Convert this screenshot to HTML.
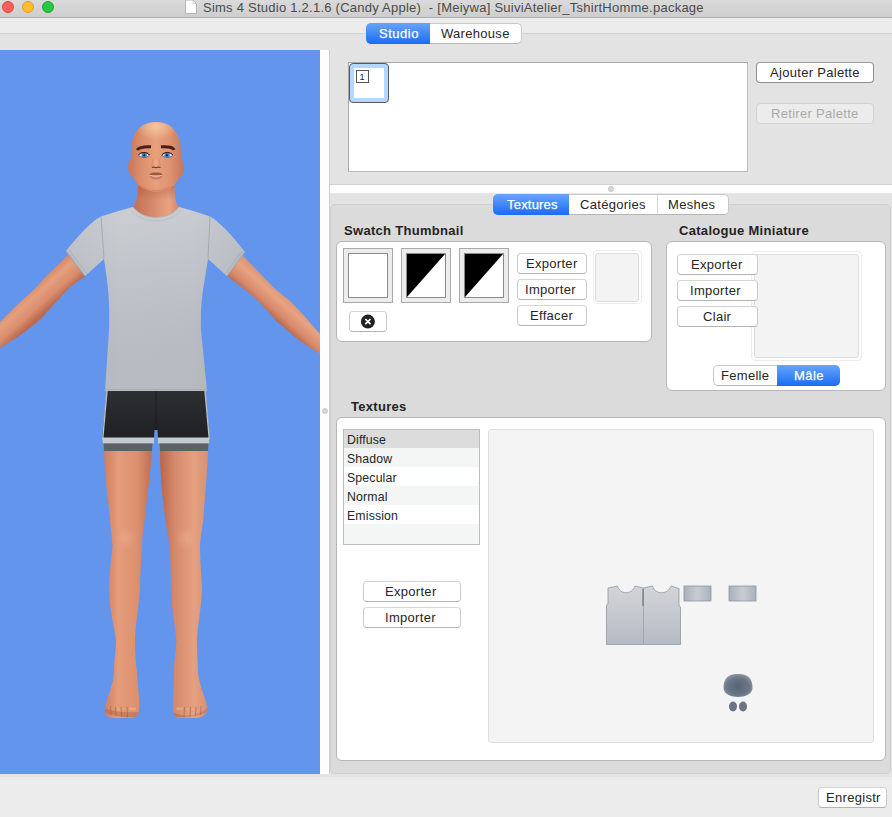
<!DOCTYPE html>
<html><head><meta charset="utf-8">
<style>
*{margin:0;padding:0;box-sizing:border-box}
html,body{width:892px;height:817px;overflow:hidden;background:#ececec;font-family:"Liberation Sans",sans-serif;font-size:13px;color:#262626}
.a{position:absolute}
.t{position:absolute;white-space:nowrap;line-height:13px;letter-spacing:0.3px}
.btn{position:absolute;background:#fff;border:1px solid #cacaca;border-top-color:#d4d4d4;border-bottom-color:#b3b3b3;border-radius:4px}
.box{position:absolute;background:#fff;border:1px solid #b6b6b6;border-radius:6px}
.lbl{position:absolute;font-weight:bold;font-size:13px;color:#232323;white-space:nowrap;line-height:13px;letter-spacing:0.3px}
.segw{position:absolute;background:#fff;border:1px solid #c9c9c9;border-bottom-color:#b6b6b6;border-radius:5px}
.sel{position:absolute;background:linear-gradient(#67a5fb,#1a6cf4)}
.dv{position:absolute;width:1px;background:#d6d6d6}
</style></head><body>
<div class="a" style="left:0;top:0;width:892px;height:18px;background:linear-gradient(#dadada,#cecece);border-bottom:1px solid #aeaeae"></div>
<div class="a" style="left:2px;top:1px;width:12px;height:12px;border-radius:50%;background:#fe5f57;border:0.5px solid #e0443e"></div>
<div class="a" style="left:22px;top:1px;width:12px;height:12px;border-radius:50%;background:#febc2e;border:0.5px solid #dea123"></div>
<div class="a" style="left:42px;top:1px;width:12px;height:12px;border-radius:50%;background:#28c840;border:0.5px solid #1aab29"></div>
<svg class="a" style="left:185px;top:0" width="13" height="15"><path d="M0.5 0 H8 L11.5 3.5 V13.5 H0.5 Z" fill="#fff" stroke="#b4b4b4" stroke-width="1"/><path d="M8 0 V3.5 H11.5" fill="none" stroke="#c4c4c4" stroke-width="0.8"/></svg>
<div class="t" style="left:203px;top:1px;color:#4b4b4b;letter-spacing:0.245px">Sims 4 Studio 1.2.1.6 (Candy Apple)&nbsp; - [Meiywa] SuiviAtelier_TshirtHomme.package</div>
<div class="a" style="left:0;top:18px;width:892px;height:16px;background:#ececec;border-bottom:1px solid #d2d2d2"></div>
<div class="a" style="left:0;top:34px;width:892px;height:16px;background:#e3e3e3"></div>
<div class="segw" style="left:366px;top:23px;width:156px;height:21px"></div>
<div class="sel" style="left:366px;top:23px;width:64px;height:21px;border-radius:5px 0 0 5px"></div>
<div class="t" style="left:379px;top:27px;color:#fff;letter-spacing:0.5px;-webkit-text-stroke:0.25px #fff">Studio</div>
<div class="t" style="left:441px;top:27px">Warehouse</div>
<div class="a" style="left:0;top:50px;width:320px;height:724px;background:#6495ed"></div>
<svg class="a" style="left:0;top:50px" width="320" height="723" viewBox="0 50 320 723">
<defs>
<linearGradient id="skinL" x1="0" x2="1" y1="0" y2="0"><stop offset="0" stop-color="#cf7f5e"/><stop offset="0.3" stop-color="#e49c7a"/><stop offset="0.7" stop-color="#dc906e"/><stop offset="1" stop-color="#c06e52"/></linearGradient>
<linearGradient id="skinR" x1="0" x2="1" y1="0" y2="0"><stop offset="0" stop-color="#b8664d"/><stop offset="0.3" stop-color="#d4896a"/><stop offset="0.7" stop-color="#e4a080"/><stop offset="1" stop-color="#d89271"/></linearGradient>
<linearGradient id="armL" gradientUnits="userSpaceOnUse" x1="29" y1="290" x2="47" y2="310"><stop offset="0" stop-color="#d48868"/><stop offset="0.3" stop-color="#e6a07e"/><stop offset="0.7" stop-color="#d98d6c"/><stop offset="1" stop-color="#b96a50"/></linearGradient>
<linearGradient id="armR" gradientUnits="userSpaceOnUse" x1="286" y1="295" x2="268" y2="315"><stop offset="0" stop-color="#dc9472"/><stop offset="0.3" stop-color="#e8a382"/><stop offset="0.7" stop-color="#d68a6a"/><stop offset="1" stop-color="#b5654c"/></linearGradient>
<linearGradient id="headG" x1="0" x2="1" y1="0" y2="0"><stop offset="0" stop-color="#c8765a"/><stop offset="0.25" stop-color="#dc906e"/><stop offset="0.5" stop-color="#e89f7c"/><stop offset="0.75" stop-color="#de9271"/><stop offset="1" stop-color="#c6755a"/></linearGradient>
<radialGradient id="scalp" cx="0.5" cy="0.15" r="0.5"><stop offset="0" stop-color="#f3c79e" stop-opacity="1"/><stop offset="1" stop-color="#f3c79e" stop-opacity="0"/></radialGradient>
<linearGradient id="neckG" x1="0" x2="1"><stop offset="0" stop-color="#c06c50"/><stop offset="0.4" stop-color="#d4876a"/><stop offset="0.75" stop-color="#e9a281"/><stop offset="1" stop-color="#cf7e60"/></linearGradient>
<linearGradient id="shirtG" x1="0" x2="1" y1="0" y2="0"><stop offset="0" stop-color="#b3b8bf"/><stop offset="0.3" stop-color="#bcc0c6"/><stop offset="0.7" stop-color="#babec5"/><stop offset="1" stop-color="#afb4bc"/></linearGradient>
<linearGradient id="shortsG" x1="0" x2="0" y1="0" y2="1"><stop offset="0" stop-color="#2f3033"/><stop offset="0.5" stop-color="#27282b"/><stop offset="1" stop-color="#202124"/></linearGradient>
<linearGradient id="shirtV" x1="0" x2="0" y1="0" y2="1"><stop offset="0" stop-color="#ffffff" stop-opacity="0.22"/><stop offset="0.45" stop-color="#ffffff" stop-opacity="0.05"/><stop offset="1" stop-color="#000000" stop-opacity="0.02"/></linearGradient>
<clipPath id="clL"><path d="M104 450 L152 450 C150 480 146 505 145 518 C143 530 142 540 142 546 C141 565 140 580 140 590 C138 610 135 630 135 641 C135 655 136 665 137 672 C138 690 140 700 139 708 C139 714 137 717 133 718 L112 718 C106 717 104 712 105 708 C108 695 114 682 114 672 C114 660 116 650 116 641 C114 625 109 605 109 590 C109 570 112 555 112.5 546 C112 535 110 525 110 518 C108 500 105 480 104 450 Z"/></clipPath><clipPath id="clR"><path d="M160 450 L208 450 C207 480 204 505 203.5 518 C202 530 200 540 200 546 C200 565 202 580 202 590 C201 610 197 630 197 641 C197 655 198 665 198 672 C200 690 207 700 207 708 C207 714 203 717 198 718 L178 718 C174 717 173 712 173 708 C173 695 174 682 174 672 C174 660 176 650 176.5 641 C175 625 171 605 171 590 C171 570 170 555 170 546 C168 535 166 525 165 518 C163 500 160 480 160 450 Z"/></clipPath>
<linearGradient id="jawSh" x1="0" x2="0" y1="0" y2="1"><stop offset="0" stop-color="#a85a42" stop-opacity="0.5"/><stop offset="1" stop-color="#a85a42" stop-opacity="0"/></linearGradient>
<radialGradient id="knee"><stop offset="0" stop-color="#f0b090" stop-opacity="0.45"/><stop offset="1" stop-color="#f0b090" stop-opacity="0"/></radialGradient>
</defs>
<!-- arms -->
<path d="M70 253 C60 263 50 272 43 279.5 C40 283 38 286 35 288.5 C26 297 17 305 10 312 C6 316 3 319 0 322 L0 348 C7 343.5 15 338.5 22 334 C29 329 35 324 41 319 C47 312 53 305 59 299 C63 294.5 66.5 290.5 70.5 287 C75 283 80 279.5 86 276 Z" fill="url(#armL)"/>
<path d="M241 254 C252 265 263 276.5 273.7 287.7 C280 293 286.5 298 292.8 303.7 C302 313 311 323.5 320 334 L320 354 C313 349.5 306 345 299 340.3 C291.5 334 284 327.5 276.8 321.2 C270 314 264 307 257.7 300.5 C248 292 238 284 227 276 Z" fill="url(#armR)"/>
<!-- legs -->
<path d="M104 450 L152 450 C150 480 146 505 145 518 C143 530 142 540 142 546 C141 565 140 580 140 590 C138 610 135 630 135 641 C135 655 136 665 137 672 C138 690 140 700 139 708 C139 714 137 717 133 718 L112 718 C106 717 104 712 105 708 C108 695 114 682 114 672 C114 660 116 650 116 641 C114 625 109 605 109 590 C109 570 112 555 112.5 546 C112 535 110 525 110 518 C108 500 105 480 104 450 Z" fill="url(#skinL)"/>
<path d="M160 450 L208 450 C207 480 204 505 203.5 518 C202 530 200 540 200 546 C200 565 202 580 202 590 C201 610 197 630 197 641 C197 655 198 665 198 672 C200 690 207 700 207 708 C207 714 203 717 198 718 L178 718 C174 717 173 712 173 708 C173 695 174 682 174 672 C174 660 176 650 176.5 641 C175 625 171 605 171 590 C171 570 170 555 170 546 C168 535 166 525 165 518 C163 500 160 480 160 450 Z" fill="url(#skinR)"/>
<ellipse cx="126" cy="538" rx="11" ry="12" fill="url(#knee)"/>
<ellipse cx="186" cy="538" rx="11" ry="12" fill="url(#knee)"/>
<!-- toes -->
<g clip-path="url(#clL)"><path d="M105 712 C110 716 125 718 139 717 L139 712 C128 713 112 712 105 708 Z" fill="#b9674f" opacity="0.55"/>
<path d="M110.5 706 L111 715 M115.5 707 L116 716 M121 707 L121.5 717 M127 707 L127.5 717" stroke="#9e533f" stroke-width="1" opacity="0.5"/>
<path d="M129 707.5 L136 707.5 L136 710 L129 710 Z" fill="#eab596" opacity="0.6"/>
<path d="M123 709 L126 709 M117 709 L120 709" stroke="#e8b093" stroke-width="1.2" opacity="0.8"/>
</g>
<g clip-path="url(#clR)"><path d="M173 712 C185 718 200 716 207 708 L207 712 C200 716 185 717 173 717 Z" fill="#b9674f" opacity="0.55"/>
<path d="M184.5 707 L184 717 M190.5 707 L190 717 M196 707 L195.5 716 M201 706 L200.5 715" stroke="#9e533f" stroke-width="1" opacity="0.5"/>
<path d="M176.5 707.5 L183 707.5 L183 710 L176.5 710 Z" fill="#eab596" opacity="0.6"/>
<path d="M186 709 L189 709 M192 709 L195 709" stroke="#e8b093" stroke-width="1.2" opacity="0.8"/>
</g>
<!-- shorts -->
<path d="M107 389 L205 389 L209.5 438 L158 438 L157.5 430 L154.5 430 L154 438 L102 438 Z" fill="url(#shortsG)"/>
<path d="M156 391 L156 430" stroke="#18191b" stroke-width="0.8"/>
<path d="M107 391 L102.8 438 M205 391 L209.2 438" stroke="#b9bec2" stroke-width="1.4" fill="none"/>
<path d="M102 437.5 L154 437.5 L154 443.5 L103 443.5 Z" fill="#c4cacd"/>
<path d="M158 437.5 L209.5 437.5 L209 443.5 L158 443.5 Z" fill="#c4cacd"/>
<path d="M103.5 443.5 L152.5 443.5 L152 451 L104 451 Z" fill="#5f6062"/>
<path d="M159.5 443.5 L208.5 443.5 L208 451 L160 451 Z" fill="#5f6062"/>
<!-- neck -->
<path d="M138 184 L174.5 184 C174.5 195 175 203 179 207 L182 214 C172 226 142 226 130 214 L133 207 C137 203 137.5 195 138 184 Z" fill="url(#neckG)"/>
<path d="M138 186 L174.5 186 L174.5 200 L138 200 Z" fill="url(#jawSh)"/>
<!-- shirt -->
<path d="M133 207 C143 221 169 221 179 207 C190 210 200 213 210 216.5 C220 222 236 240 245 252 L227 276 L208 259 C204 285 200 300 201 330 L207 391 L105 391 L109 330 C110 300 108 285 104 259 L85 276 L66 251 C75 240 90 222 101 216.5 C112 213 122 210 133 207 Z" fill="url(#shirtG)"/><path d="M133 207 C143 221 169 221 179 207 C190 210 200 213 210 216.5 C220 222 236 240 245 252 L227 276 L208 259 C204 285 200 300 201 330 L207 391 L105 391 L109 330 C110 300 108 285 104 259 L85 276 L66 251 C75 240 90 222 101 216.5 C112 213 122 210 133 207 Z" fill="url(#shirtV)"/>
<path d="M133 207 C143 221 169 221 179 207" stroke="#aeb2b8" stroke-width="0.8" fill="none"/>
<path d="M130.5 209.5 C141 224.5 171 224.5 181.5 209.5" stroke="#9da2a9" stroke-width="0.6" stroke-dasharray="1.2 0.8" fill="none" opacity="0.8"/>
<path d="M101 216.5 C102 230 103 245 104 259 M210 216.5 C209.5 230 208.5 245 208 259" stroke="#9da2a9" stroke-width="0.8" fill="none"/>
<path d="M66.5 251.5 L85 276 M244.5 252.5 L227 276" stroke="#a3a8ae" stroke-width="1.2" fill="none"/><path d="M69 250 L86.5 273.5 M242 251 L226 273" stroke="#8f949b" stroke-width="0.5" fill="none" opacity="0.8"/>
<path d="M105 389.5 L207 389.5" stroke="#a9adb3" stroke-width="1"/>
<!-- head -->
<path d="M156 122 C140 122 131 134 131 152 L131 160 L128.5 162 C127 170 130 177 134 178 C137 186 145 191.5 156 191.5 C167 191.5 175 186 179 178 C183 177 185 170 183.5 162 L181 160 L181 152 C181 134 172 122 156 122 Z" fill="url(#headG)"/>
<ellipse cx="156" cy="136" rx="20" ry="14" fill="url(#scalp)"/>
<path d="M137 150 C139 147 143 146.5 151 146.8" stroke="#4a1f17" stroke-width="2.9" fill="none"/>
<path d="M161 146.8 C169 146.5 173 147 174 150" stroke="#4a1f17" stroke-width="2.9" fill="none"/>
<path d="M138.6 155.3 C141 152 147 152 149.3 155.3 C147 158 141 158 138.6 155.3 Z" fill="#eef2f6" stroke="#3c2a26" stroke-width="0.6"/>
<path d="M162 155.3 C164.5 152 170 152 172.7 155.3 C170 158 164.5 158 162 155.3 Z" fill="#eef2f6" stroke="#3c2a26" stroke-width="0.6"/>
<circle cx="144.2" cy="155.2" r="2.6" fill="#2f86d2"/>
<circle cx="167" cy="155.2" r="2.6" fill="#2f86d2"/>
<circle cx="144.2" cy="155.2" r="1" fill="#111"/><path d="M138.3 155 C141 151.6 147 151.6 149.6 155" stroke="#2a1a16" stroke-width="1" fill="none"/>
<circle cx="167" cy="155.2" r="1" fill="#111"/><path d="M161.7 155 C164.5 151.6 170 151.6 173 155" stroke="#2a1a16" stroke-width="1" fill="none"/>
<path d="M153 159 C152.5 162 152 164 151.5 166 M159 159 C159.5 162 160 164 160.5 166" stroke="#c97a5c" stroke-width="1.4" opacity="0.3"/><ellipse cx="156" cy="163" rx="2.2" ry="4" fill="#f0b08b" opacity="0.5"/>
<path d="M152 167.8 C153.5 166.3 155 167.2 156 167.8 C157 167.2 158.5 166.3 160.5 167.8" stroke="#7e3d2e" stroke-width="1.3" fill="none"/>
<path d="M148.5 175 C151 172.5 154 172 156 172.8 C158 172 161 172.5 163 175 C159 175.6 152 175.6 148.5 175 Z" fill="#a0553f"/>
<path d="M149.5 175.3 C153 176.2 159 176.2 162.3 175.3" stroke="#dcc6bb" stroke-width="0.9" fill="none"/>
<path d="M150 176.4 C153 179.2 159 179.2 162 176.4" stroke="#c07a62" stroke-width="1.8" fill="none"/>
<path d="M142 186 C148 192 164 192 170 186" stroke="#c77859" stroke-width="1" fill="none" opacity="0.6"/>
</svg>
<div class="a" style="left:320px;top:50px;width:10px;height:724px;background:#fdfdfd;border-right:1px solid #cdcdcd"></div>
<div class="a" style="left:322px;top:408px;width:6px;height:6px;border-radius:50%;background:#d9d9d9;border:1px solid #c6c6c6"></div>
<div class="a" style="left:330px;top:50px;width:562px;height:135px;background:#e3e3e3;border-bottom:1px solid #d2d2d2"></div>
<div class="a" style="left:348px;top:62px;width:400px;height:110px;background:#fff;border:1px solid #bcbcbc;border-left-color:#a8a8a8;border-top-color:#a8a8a8"></div>
<div class="a" style="left:349px;top:63px;width:40px;height:40px;border-radius:4px;background:#b3d7ff;border:1px solid #5a5a5a"></div>
<div class="a" style="left:354px;top:68px;width:30px;height:30px;background:#fff"></div>
<div class="a" style="left:356px;top:70px;width:13px;height:13px;background:#fff;border:1px solid #555"></div>
<div class="t" style="left:359.5px;top:72.5px;font-size:9px;line-height:9px;color:#222;letter-spacing:0">1</div>
<div class="btn" style="left:756px;top:62px;width:118px;height:21px;border-color:#8e8e8e;border-top-color:#9a9a9a"></div><div class="t" style="left:770px;top:66px;">Ajouter Palette</div>
<div class="btn" style="left:756px;top:103px;width:118px;height:21px;background:#ececec;border-color:#d2d2d2"></div><div class="t" style="left:771px;top:107px;color:#a9a9a9">Retirer Palette</div>
<div class="a" style="left:330px;top:185px;width:562px;height:8px;background:#fdfdfd"></div>
<div class="a" style="left:608px;top:186px;width:6px;height:6px;border-radius:50%;background:#d9d9d9;border:1px solid #c6c6c6"></div>
<div class="a" style="left:330px;top:193px;width:562px;height:581px;background:#e3e3e3;border-top:1px solid #e8e8e8"></div>
<div class="a" style="left:330px;top:204px;width:561px;height:570px;background:#dbdbdb;border:1px solid #d0d0d0;border-radius:5px"></div>
<div class="segw" style="left:493px;top:194px;width:236px;height:21px"></div>
<div class="sel" style="left:493px;top:194px;width:76px;height:21px;border-radius:5px 0 0 5px"></div>
<div class="dv" style="left:657px;top:195px;height:19px"></div>
<div class="t" style="left:507px;top:198px;color:#fff;letter-spacing:0.2px;-webkit-text-stroke:0.25px #fff">Textures</div>
<div class="t" style="left:580px;top:198px">Catégories</div>
<div class="t" style="left:668px;top:198px">Meshes</div>
<div class="lbl" style="left:344px;top:224px">Swatch Thumbnail</div>
<div class="box" style="left:336px;top:241px;width:316px;height:101px"></div>
<div class="a" style="left:343px;top:248px;width:50px;height:55px;background:#ececec;border:1px solid #a9a9a9"></div>
<div class="a" style="left:401px;top:248px;width:50px;height:55px;background:#ececec;border:1px solid #a9a9a9"></div>
<div class="a" style="left:459px;top:248px;width:50px;height:55px;background:#ececec;border:1px solid #a9a9a9"></div>
<div class="a" style="left:348px;top:253px;width:40px;height:45px;background:#fff;border:1px solid #8a8a8a"></div>
<svg class="a" style="left:406px;top:253px" width="40" height="45"><rect x="0.5" y="0.5" width="39" height="44" fill="#fff" stroke="#8a8a8a"/><path d="M1 1 H39 L1 44 Z" fill="#000"/></svg>
<svg class="a" style="left:464px;top:253px" width="40" height="45"><rect x="0.5" y="0.5" width="39" height="44" fill="#fff" stroke="#8a8a8a"/><path d="M1 1 H39 L1 44 Z" fill="#000"/></svg>
<div class="btn" style="left:349px;top:311px;width:38px;height:21px"></div>
<svg class="a" style="left:360px;top:314px" width="16" height="16"><circle cx="7.9" cy="7.6" r="7" fill="#222"/><path d="M5.3 5 L10.5 10.2 M10.5 5 L5.3 10.2" stroke="#fff" stroke-width="1.7"/></svg>
<div class="btn" style="left:517px;top:253px;width:70px;height:21px;"></div><div class="t" style="left:526px;top:257px;">Exporter</div>
<div class="btn" style="left:517px;top:279px;width:70px;height:21px;"></div><div class="t" style="left:525px;top:283px;">Importer</div>
<div class="btn" style="left:517px;top:305px;width:70px;height:21px;"></div><div class="t" style="left:530px;top:309px;">Effacer</div>
<div class="a" style="left:593px;top:250px;width:49px;height:54px;background:#fff;border:1px solid #ececec;border-radius:4px"></div>
<div class="a" style="left:595px;top:253px;width:44px;height:49px;background:#f3f3f3;border:1px solid #dedede;border-radius:3px"></div>
<div class="lbl" style="left:679px;top:224px">Catalogue Miniature</div>
<div class="box" style="left:666px;top:241px;width:220px;height:150px"></div>
<div class="a" style="left:751px;top:251px;width:111px;height:110px;background:#fff;border:1px solid #ececec;border-radius:4px"></div>
<div class="a" style="left:754px;top:254px;width:105px;height:104px;background:#f3f3f3;border:1px solid #dedede;border-radius:3px"></div>
<div class="btn" style="left:677px;top:254px;width:81px;height:21px;"></div><div class="t" style="left:691px;top:258px;">Exporter</div>
<div class="btn" style="left:677px;top:280px;width:81px;height:21px;"></div><div class="t" style="left:690px;top:284px;">Importer</div>
<div class="btn" style="left:677px;top:306px;width:81px;height:21px;"></div><div class="t" style="left:703px;top:310px;">Clair</div>
<div class="segw" style="left:713px;top:365px;width:127px;height:21px"></div>
<div class="sel" style="left:777px;top:365px;width:63px;height:21px;border-radius:0 5px 5px 0"></div>
<div class="t" style="left:721px;top:369px">Femelle</div>
<div class="t" style="left:794px;top:369px;color:#fff;letter-spacing:0.45px;-webkit-text-stroke:0.25px #fff">Mâle</div>
<div class="lbl" style="left:351px;top:400px">Textures</div>
<div class="box" style="left:336px;top:417px;width:550px;height:344px"></div>
<div class="a" style="left:343px;top:429px;width:137px;height:116px;background:#f4f5f5;border:1px solid #bdbdbd"></div>
<div class="a" style="left:344px;top:430px;width:135px;height:18px;background:#dcdcdc"></div>
<div class="a" style="left:344px;top:467px;width:135px;height:19px;background:#fff"></div>
<div class="a" style="left:344px;top:505px;width:135px;height:19px;background:#fff"></div>
<div class="t" style="left:347px;top:434px;font-size:12.3px;letter-spacing:0.15px">Diffuse</div>
<div class="t" style="left:347px;top:453px;font-size:12.3px;letter-spacing:0.15px">Shadow</div>
<div class="t" style="left:347px;top:472px;font-size:12.3px;letter-spacing:0.15px">Specular</div>
<div class="t" style="left:347px;top:491px;font-size:12.3px;letter-spacing:0.15px">Normal</div>
<div class="t" style="left:347px;top:510px;font-size:12.3px;letter-spacing:0.15px">Emission</div>
<div class="btn" style="left:363px;top:581px;width:98px;height:21px;"></div><div class="t" style="left:385px;top:585px;">Exporter</div>
<div class="btn" style="left:363px;top:607px;width:98px;height:21px;"></div><div class="t" style="left:385px;top:611px;">Importer</div>
<div class="a" style="left:488px;top:429px;width:386px;height:314px;background:#f4f4f4;border:1px solid #e0e0e0;border-radius:3px"></div>
<svg class="a" style="left:600px;top:580px" width="170" height="140" viewBox="600 580 170 140">
<defs>
<linearGradient id="tex" x1="0" x2="0" y1="0" y2="1"><stop offset="0" stop-color="#d3d5d8"/><stop offset="0.35" stop-color="#c9ccd1"/><stop offset="1" stop-color="#b5bbc5"/></linearGradient>
<linearGradient id="slv" x1="0" x2="1" y1="0" y2="0"><stop offset="0" stop-color="#a9b1bd"/><stop offset="0.5" stop-color="#c8ccd2"/><stop offset="1" stop-color="#aab2be"/></linearGradient>
<radialGradient id="blob" cx="0.5" cy="0.55" r="0.55"><stop offset="0" stop-color="#586374"/><stop offset="0.7" stop-color="#6b7687"/><stop offset="1" stop-color="#8c95a3"/></radialGradient>
</defs>
<path d="M608 588 L617.5 586 C620 595 632 595 635 586 L643.5 588 L652.5 586 C655 595 668 595 671 586 L679 588.5 L679 606 L680.5 607 L680.5 644.5 L606.5 644.5 L606.5 605 L608 604 Z" fill="url(#tex)" stroke="#8f98a6" stroke-width="0.8"/>
<path d="M643.5 588 L643.5 644" stroke="#9aa2ae" stroke-width="0.8"/>
<path d="M643 589 L643 606" stroke="#6d7684" stroke-width="1.2"/>
<rect x="684" y="586" width="27" height="15" fill="url(#slv)" stroke="#8c95a2" stroke-width="0.8"/>
<rect x="729" y="586" width="27" height="15" fill="url(#slv)" stroke="#8c95a2" stroke-width="0.8"/>
<path d="M723.5 688 C723.5 676 731 674 738 674 C745 674 752.5 676 752.5 688 C752.5 694 745 697 738 697 C731 697 723.5 694 723.5 688 Z" fill="url(#blob)"/>
<ellipse cx="733" cy="706.5" rx="4" ry="5" fill="#6a7485"/>
<ellipse cx="743" cy="706.5" rx="4" ry="5" fill="#6a7485"/>
</svg>
<div class="a" style="left:0;top:774px;width:892px;height:43px;background:#ececec;border-top:3px solid #e3e3e3"></div>
<div class="btn" style="left:818px;top:787px;width:69px;height:21px;"></div><div class="t" style="left:826px;top:791px;">Enregistr</div>
</body></html>
